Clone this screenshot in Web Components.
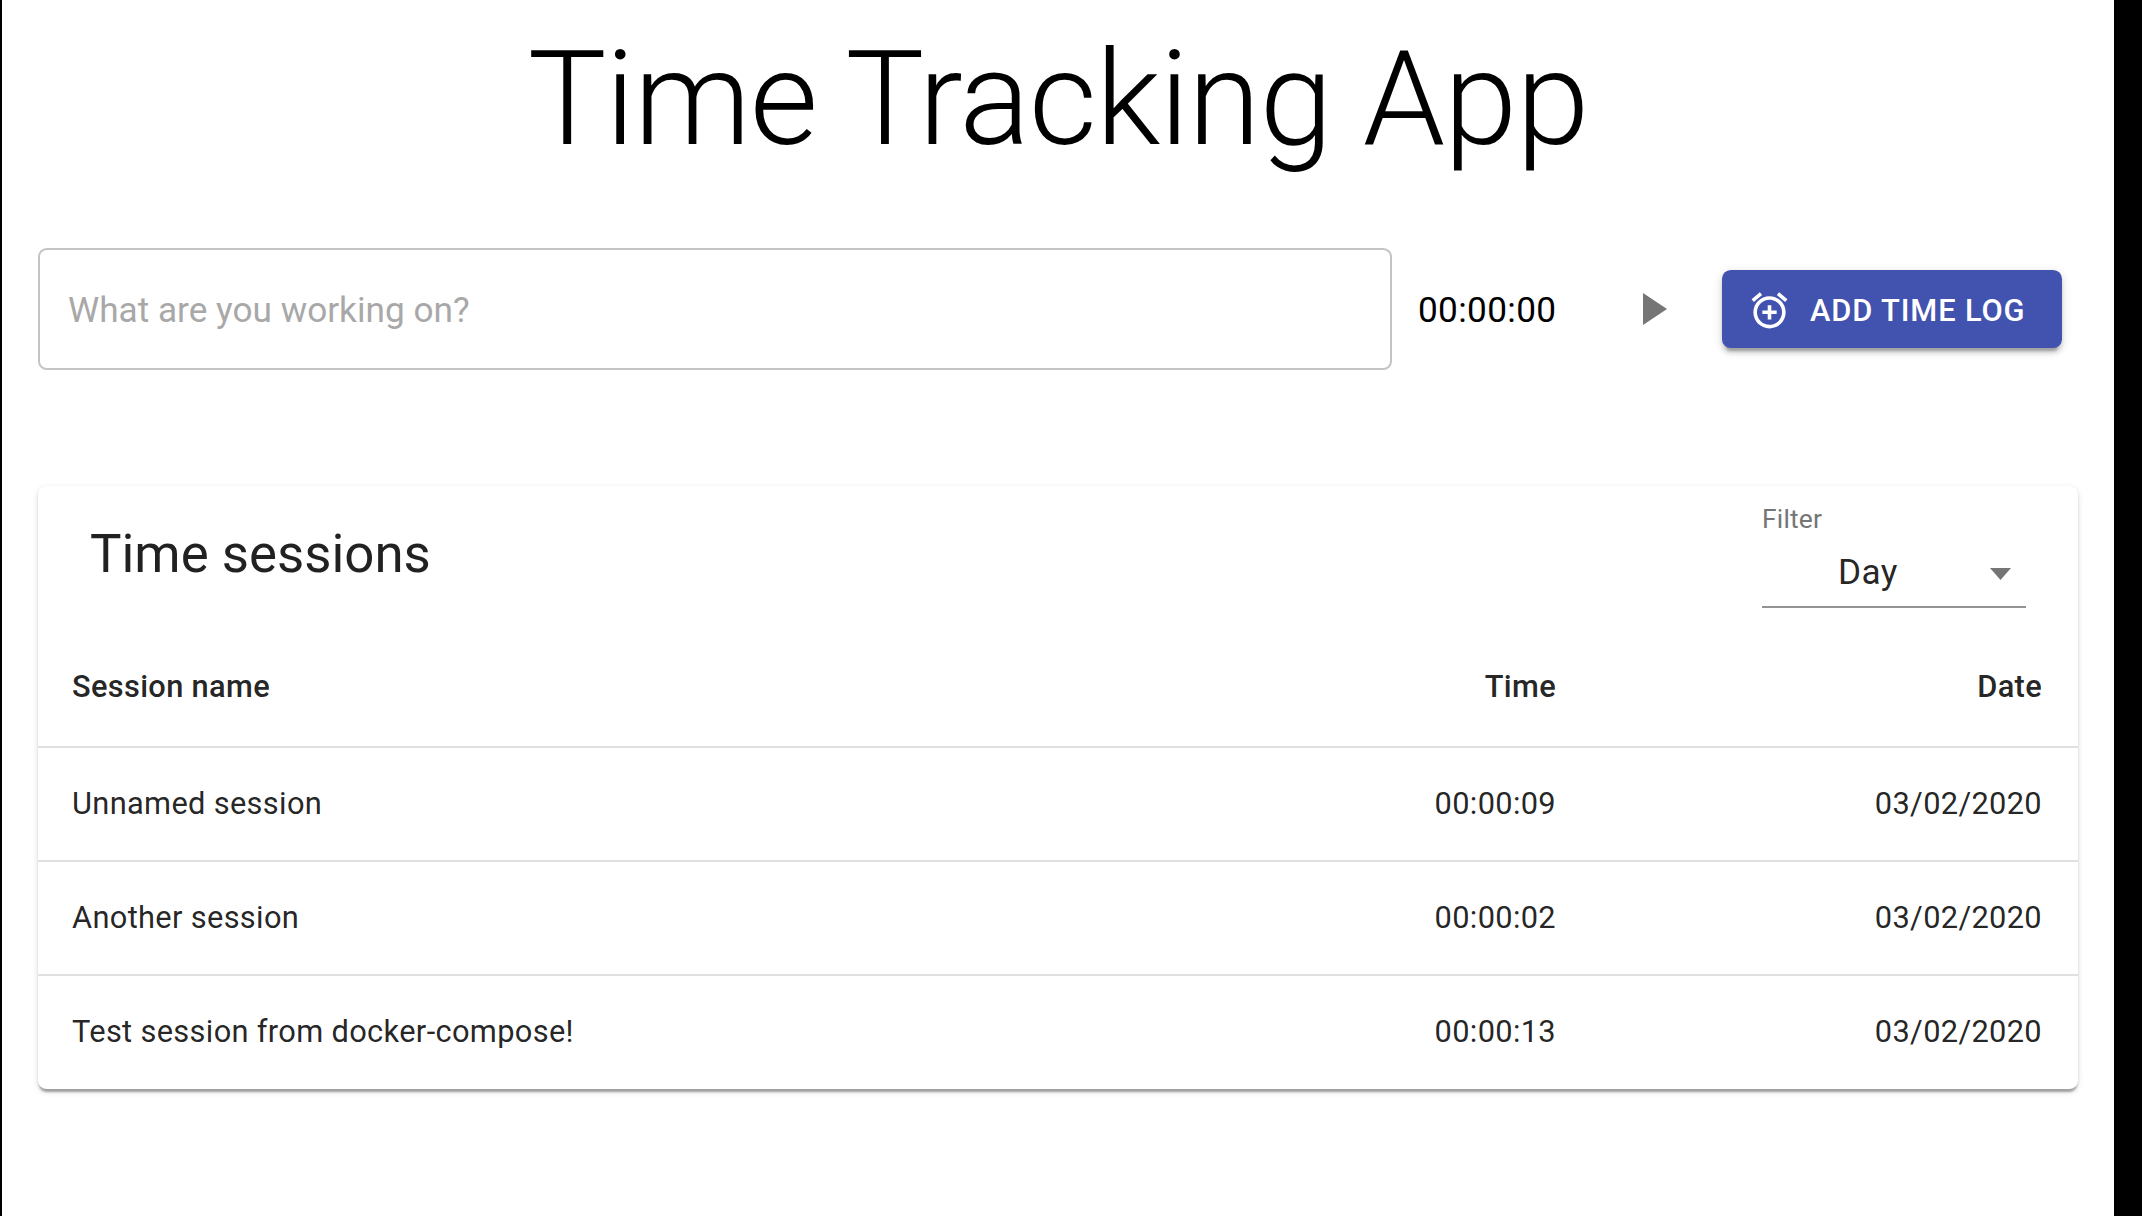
<!DOCTYPE html>
<html>
<head>
<meta charset="utf-8">
<title>Time Tracking App</title>
<style>
  html, body { margin: 0; height: 100%; background: #000; }
  body { font-family: Roboto, "Liberation Sans", sans-serif; }
</style>
</head>
<body>
<time-app>
  <app-title>Time Tracking App</app-title>
  <session-bar></session-bar>
  <sessions-card>
    <session-row heading name="Session name" time="Time" date="Date"></session-row>
    <session-row name="Unnamed session" time="00:00:09" date="03/02/2020"></session-row>
    <session-row name="Another session" time="00:00:02" date="03/02/2020"></session-row>
    <session-row last name="Test session from docker-compose!" time="00:00:13" date="03/02/2020"></session-row>
  </sessions-card>
</time-app>

<script>
class TimeApp extends HTMLElement {
  constructor() {
    super();
    this.attachShadow({ mode: 'open' }).innerHTML = `
      <style>
        :host {
          display: block;
          box-sizing: border-box;
          margin-left: 2px;
          width: 2112px;
          height: 1216px;
          padding: 0 36px;
          background: #fff;
          overflow: hidden;
        }
      </style>
      <slot></slot>`;
  }
}

class AppTitle extends HTMLElement {
  constructor() {
    super();
    this.attachShadow({ mode: 'open' }).innerHTML = `
      <style>
        :host {
          display: block;
          padding-top: 22px;
          height: 228px;
          box-sizing: border-box;
          text-align: center;
          font-size: 132px;
          font-weight: 300;
          line-height: 155px;
          letter-spacing: -1.1px;
          color: #000;
        }
      </style>
      <slot></slot>`;
  }
}

class SessionBar extends HTMLElement {
  constructor() {
    super();
    this.attachShadow({ mode: 'open' }).innerHTML = `
      <style>
        :host {
          display: flex;
          align-items: center;
          height: 122px;
          padding-right: 16px;
          margin-top: 20px;
          color: #000;
        }
        .field {
          box-sizing: border-box;
          width: 1354px;
          height: 122px;
          display: flex;
          align-items: center;
          padding: 2px 0 0 28px;
          border: 2px solid #c4c4c4;
          border-radius: 8.8px;
          font-size: 35.2px;
          color: #a8a8a8;
        }
        .timer {
          margin-left: 26px;
          padding-top: 2px;
          width: 225px;
          font-size: 35.2px;
          letter-spacing: .33px;
        }
        .play { display: block; width: 24px; height: 32px; }
        .add {
          box-sizing: border-box;
          margin-left: auto;
          width: 340px;
          height: 78px;
          display: flex;
          align-items: center;
          padding: 2px 0 0 26px;
          gap: 19px;
          border-radius: 8.8px;
          background: #4253af;
          color: #fff;
          font-size: 30.8px;
          font-weight: 500;
          letter-spacing: .88px;
          box-shadow: 0 6.6px 2.2px -4.4px rgba(0,0,0,.2), 0 4.4px 4.4px 0 rgba(0,0,0,.14), 0 2.2px 11px 0 rgba(0,0,0,.12);
        }
        .add svg { display: block; width: 43px; height: 43px; fill: #fff; }
      </style>
      <div class="field"><span>What are you working on?</span></div>
      <div class="timer">00:00:00</div>
      <svg class="play" viewBox="0 0 24 32"><path d="M0 0L24 16L0 32z" fill="#757575"/></svg>
      <div class="add">
        <svg viewBox="0 0 24 24"><path d="M7.88 3.39L6.6 1.86 2 5.71l1.29 1.53 4.59-3.85zM22 5.72l-4.6-3.86-1.29 1.53 4.6 3.86L22 5.72zM12 4c-4.97 0-9 4.03-9 9s4.02 9 9 9c4.97 0 9-4.03 9-9s-4.03-9-9-9zm0 16c-3.87 0-7-3.13-7-7s3.13-7 7-7 7 3.13 7 7-3.13 7-7 7zm1-11h-2v3H8v2h3v3h2v-3h3v-2h-3V9z"/></svg>
        <span>ADD TIME LOG</span>
      </div>`;
  }
}

class FilterSelect extends HTMLElement {
  constructor() {
    super();
    this.attachShadow({ mode: 'open' }).innerHTML = `
      <style>
        :host { display: block; width: 264px; }
        .label { font-size: 26.4px; line-height: 30px; color: #757575; letter-spacing: .2px; }
        .select {
          box-sizing: border-box;
          height: 65px;
          margin-top: 9px;
          padding-bottom: 5px;
          display: flex;
          align-items: center;
          position: relative;
          padding-left: 76px;
          border-bottom: 2px solid #949494;
          font-size: 35.2px;
          letter-spacing: .33px;
          color: rgba(0,0,0,.87);
        }
        .caret { position: absolute; left: 228px; top: 25px; width: 21px; height: 12px; }
      </style>
      <div class="label">Filter</div>
      <div class="select">
        <span>Day</span>
        <svg class="caret" viewBox="0 0 21 12"><path d="M0 0H21L10.5 12z" fill="#757575"/></svg>
      </div>`;
  }
}

class SessionsCard extends HTMLElement {
  constructor() {
    super();
    this.attachShadow({ mode: 'open' }).innerHTML = `
      <style>
        :host {
          display: block;
          margin-top: 116px;
          border-radius: 8.8px;
          background: #fff;
          box-shadow: 0 4.4px 2.2px -2.2px rgba(0,0,0,.2), 0 2.2px 2.2px 0 rgba(0,0,0,.14), 0 2.2px 6.6px 0 rgba(0,0,0,.12);
        }
        header {
          height: 148px;
          box-sizing: border-box;
          display: flex;
          justify-content: space-between;
          padding: 18px 52px 0 52px;
          color: rgba(0,0,0,.87);
        }
        h2 { margin: 15px 0 0; font-size: 52.8px; line-height: 70px; font-weight: 400; }
      </style>
      <header>
        <h2>Time sessions</h2>
        <filter-select></filter-select>
      </header>
      <slot></slot>`;
  }
}

class SessionRow extends HTMLElement {
  constructor() {
    super();
    const root = this.attachShadow({ mode: 'open' });
    root.innerHTML = `
      <style>
        :host {
          display: grid;
          grid-template-columns: 1fr 300px 486px;
          align-items: center;
          box-sizing: border-box;
          height: 114px;
          padding: 0 36px 2px 34px;
          border-bottom: 2px solid #e0e0e0;
          font-size: 30.8px;
          letter-spacing: .33px;
          color: rgba(0,0,0,.87);
        }
        :host([heading]) { font-weight: 500; padding-bottom: 8px; }
        :host([last]) { border-bottom: 0; height: 113px; }
        .r { text-align: right; }
      </style>
      <div class="n"></div><div class="r t"></div><div class="r d"></div>`;
    root.querySelector('.n').textContent = this.getAttribute('name');
    root.querySelector('.t').textContent = this.getAttribute('time');
    root.querySelector('.d').textContent = this.getAttribute('date');
  }
}

customElements.define('time-app', TimeApp);
customElements.define('app-title', AppTitle);
customElements.define('session-bar', SessionBar);
customElements.define('filter-select', FilterSelect);
customElements.define('sessions-card', SessionsCard);
customElements.define('session-row', SessionRow);
</script>
</body>
</html>
